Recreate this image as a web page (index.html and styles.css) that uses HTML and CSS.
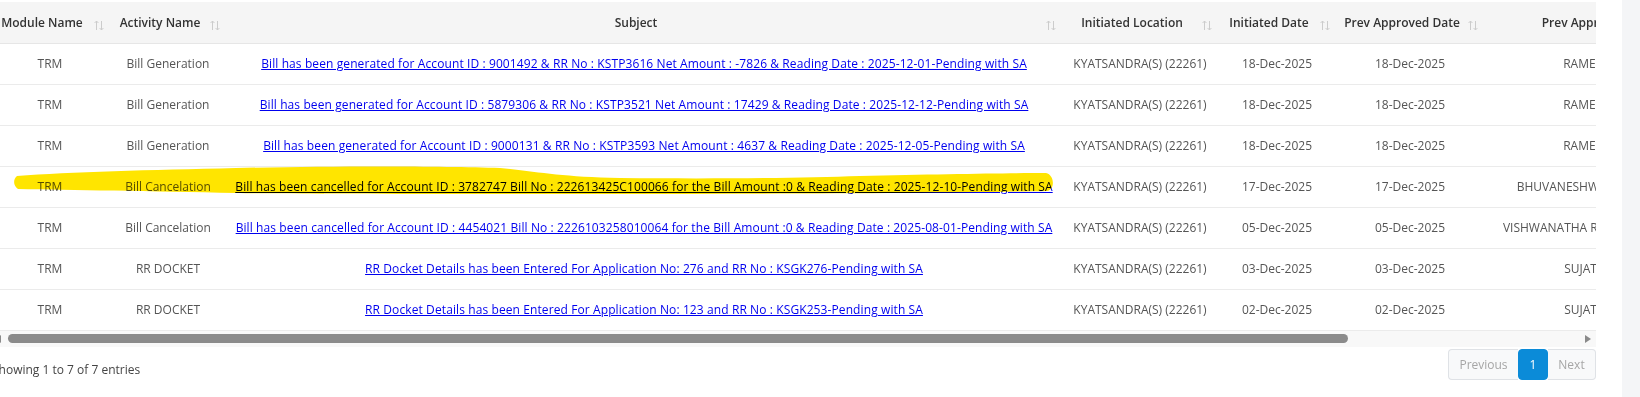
FILE: index.html
```html
<!DOCTYPE html>
<html lang="en">
<head>
<meta charset="utf-8">
<title>Pending Approvals</title>
<link rel="stylesheet" href="styles.css">
</head>
<body>
<div class="page">
  <div class="main">
    <div class="table-wrap">
      <table class="grid">
        <colgroup>
          <col class="c-module"><col class="c-activity"><col class="c-subject"><col class="c-location"><col class="c-date"><col class="c-prevdate"><col class="c-prevby">
        </colgroup>
        <thead>
          <tr>
            <th><div class="th-in"><span class="lbl">Module Name</span><span class="sort"><svg width="10" height="11" viewBox="0 0 10 11"><path d="M2.5 10V1M0.6 3L2.5 1L4.4 3M7.5 1V10M5.6 8L7.5 10L9.4 8" fill="none" stroke="#cccccc" stroke-width="1"/></svg></span></div></th>
            <th><div class="th-in"><span class="lbl">Activity Name</span><span class="sort"><svg width="10" height="11" viewBox="0 0 10 11"><path d="M2.5 10V1M0.6 3L2.5 1L4.4 3M7.5 1V10M5.6 8L7.5 10L9.4 8" fill="none" stroke="#cccccc" stroke-width="1"/></svg></span></div></th>
            <th><div class="th-in"><span class="lbl">Subject</span><span class="sort"><svg width="10" height="11" viewBox="0 0 10 11"><path d="M2.5 10V1M0.6 3L2.5 1L4.4 3M7.5 1V10M5.6 8L7.5 10L9.4 8" fill="none" stroke="#cccccc" stroke-width="1"/></svg></span></div></th>
            <th><div class="th-in"><span class="lbl">Initiated Location</span><span class="sort"><svg width="10" height="11" viewBox="0 0 10 11"><path d="M2.5 10V1M0.6 3L2.5 1L4.4 3M7.5 1V10M5.6 8L7.5 10L9.4 8" fill="none" stroke="#cccccc" stroke-width="1"/></svg></span></div></th>
            <th><div class="th-in"><span class="lbl">Initiated Date</span><span class="sort"><svg width="10" height="11" viewBox="0 0 10 11"><path d="M2.5 10V1M0.6 3L2.5 1L4.4 3M7.5 1V10M5.6 8L7.5 10L9.4 8" fill="none" stroke="#cccccc" stroke-width="1"/></svg></span></div></th>
            <th><div class="th-in"><span class="lbl">Prev Approved Date</span><span class="sort"><svg width="10" height="11" viewBox="0 0 10 11"><path d="M2.5 10V1M0.6 3L2.5 1L4.4 3M7.5 1V10M5.6 8L7.5 10L9.4 8" fill="none" stroke="#cccccc" stroke-width="1"/></svg></span></div></th>
            <th><div class="th-in"><span class="lbl">Prev Approved By</span><span class="sort"><svg width="10" height="11" viewBox="0 0 10 11"><path d="M2.5 10V1M0.6 3L2.5 1L4.4 3M7.5 1V10M5.6 8L7.5 10L9.4 8" fill="none" stroke="#cccccc" stroke-width="1"/></svg></span></div></th>
          </tr>
        </thead>
        <tbody>
          <tr>
            <td>TRM</td><td>Bill Generation</td>
            <td><a href="#">Bill has been generated for Account ID : 9001492 &amp; RR No : KSTP3616 Net Amount : -7826 &amp; Reading Date : 2025-12-01-Pending with SA</a></td>
            <td>KYATSANDRA(S) (22261)</td><td>18-Dec-2025</td><td>18-Dec-2025</td><td>RAMESHA K S</td>
          </tr>
          <tr>
            <td>TRM</td><td>Bill Generation</td>
            <td><a href="#">Bill has been generated for Account ID : 5879306 &amp; RR No : KSTP3521 Net Amount : 17429 &amp; Reading Date : 2025-12-12-Pending with SA</a></td>
            <td>KYATSANDRA(S) (22261)</td><td>18-Dec-2025</td><td>18-Dec-2025</td><td>RAMESHA K S</td>
          </tr>
          <tr>
            <td>TRM</td><td>Bill Generation</td>
            <td><a href="#">Bill has been generated for Account ID : 9000131 &amp; RR No : KSTP3593 Net Amount : 4637 &amp; Reading Date : 2025-12-05-Pending with SA</a></td>
            <td>KYATSANDRA(S) (22261)</td><td>18-Dec-2025</td><td>18-Dec-2025</td><td>RAMESHA K S</td>
          </tr>
          <tr>
            <td>TRM</td><td>Bill Cancelation</td>
            <td><a href="#">Bill has been cancelled for Account ID : 3782747 Bill No : 222613425C100066 for the Bill Amount :0 &amp; Reading Date : 2025-12-10-Pending with SA</a></td>
            <td>KYATSANDRA(S) (22261)</td><td>17-Dec-2025</td><td>17-Dec-2025</td><td>BHUVANESHWARI B G SHETTY</td>
          </tr>
          <tr>
            <td>TRM</td><td>Bill Cancelation</td>
            <td><a href="#">Bill has been cancelled for Account ID : 4454021 Bill No : 2226103258010064 for the Bill Amount :0 &amp; Reading Date : 2025-08-01-Pending with SA</a></td>
            <td>KYATSANDRA(S) (22261)</td><td>05-Dec-2025</td><td>05-Dec-2025</td><td>VISHWANATHA R (ASST. ENGINEER)</td>
          </tr>
          <tr>
            <td>TRM</td><td>RR DOCKET</td>
            <td><a href="#">RR Docket Details has been Entered For Application No: 276 and RR No : KSGK276-Pending with SA</a></td>
            <td>KYATSANDRA(S) (22261)</td><td>03-Dec-2025</td><td>03-Dec-2025</td><td>SUJATHA M R</td>
          </tr>
          <tr>
            <td>TRM</td><td>RR DOCKET</td>
            <td><a href="#">RR Docket Details has been Entered For Application No: 123 and RR No : KSGK253-Pending with SA</a></td>
            <td>KYATSANDRA(S) (22261)</td><td>02-Dec-2025</td><td>02-Dec-2025</td><td>SUJATHA M R</td>
          </tr>
        </tbody>
      </table>
    </div>
    <div class="hscroll">
      <span class="sb-btn sb-left"><span class="tri-left"></span></span>
      <div class="sb-track"><div class="sb-thumb"></div></div>
      <span class="sb-btn sb-right"><span class="tri-right"></span></span>
    </div>
    <div class="footer">
      <div class="info">Showing 1 to 7 of 7 entries</div>
      <div class="paginate">
        <span class="pg pg-prev">Previous</span>
        <span class="pg pg-cur">1</span>
        <span class="pg pg-next">Next</span>
      </div>
    </div>
  </div>
  <aside class="side"></aside>
  <svg class="marker" width="1100" height="210" viewBox="0 0 1100 210">
    <path d="M17 176 C70 172 150 170 236 168 C330 166 440 166 500 168 C540 172 560 177 620 178 C720 179 800 178 860 176 C940 174 1010 173 1046 173 C1055 175 1055 190 1047 191 C960 193 800 194 620 194 C480 194 300 194 236 193 C150 191 70 190 18 189 C13 186 13 179 17 176 Z" fill="#ffe500"/>
  </svg>
</div>
</body>
</html>
```
FILE: styles.css
```css
* { box-sizing: border-box; }
html, body { margin: 0; padding: 0; background: #ffffff; }
body {
  font-family: "Open Sans", "Noto Sans", "Liberation Sans", sans-serif;
  font-size: 12px;
  color: #555555;
  width: 1640px;
  height: 397px;
  overflow: hidden;
}
.page {
  position: relative;
  display: flex;
  height: 397px;
}
.main {
  width: 1606px;
  margin-left: -10px;
  padding-top: 2px;
  flex: none;
}
.side {
  margin-left: 26px;
  width: 18px;
  background: #f4f5f7;
  flex: none;
}
.table-wrap {
  width: 1606px;
  overflow: hidden;
}
.grid {
  border-collapse: collapse;
  table-layout: fixed;
  width: 1728px;
}
.c-module { width: 120px; }
.c-activity { width: 116px; }
.c-subject { width: 836px; }
.c-location { width: 156px; }
.c-date { width: 118px; }
.c-prevdate { width: 148px; }
.c-prevby { width: 234px; }

.grid th {
  height: 41px;
  background: #f5f5f5;
  border-bottom: 1px solid #e6e6e6;
  padding: 0 6px 0 8px;
  font-weight: 600;
  color: #333333;
  white-space: nowrap;
  overflow: hidden;
}
.th-in {
  display: flex;
  align-items: center;
}
.lbl {
  flex: 1;
  text-align: center;
  white-space: nowrap;
}
.sort {
  width: 18px;
  display: flex;
  justify-content: flex-end;
  padding-top: 7px;
}
.sort svg { display: block; }
.grid td {
  height: 41px;
  border-bottom: 1px solid #ebebeb;
  padding: 0 8px;
  text-align: center;
  white-space: nowrap;
  overflow: hidden;
}
.grid td a {
  color: #0000ee;
  text-decoration: underline;
  letter-spacing: 0.1px;
}

.hscroll {
  display: flex;
  align-items: center;
  height: 16px;
  background: #f8f8f8;
}
.sb-btn {
  width: 15px;
  height: 16px;
  display: flex;
  align-items: center;
  justify-content: center;
  flex: none;
}
.sb-right { width: 16px; justify-content: flex-start; padding-left: 5px; }
.tri-left {
  width: 0; height: 0;
  border-top: 4px solid transparent;
  border-bottom: 4px solid transparent;
  border-right: 6px solid #8a8a8a;
}
.tri-right {
  width: 0; height: 0;
  border-top: 4px solid transparent;
  border-bottom: 4px solid transparent;
  border-left: 6px solid #8a8a8a;
}
.sb-track {
  flex: 1;
  height: 16px;
  display: flex;
  align-items: center;
}
.sb-thumb {
  margin-left: 3px;
  width: 1340px;
  height: 9px;
  border-radius: 5px;
  background: #8b8b8b;
}

.footer {
  display: flex;
  justify-content: space-between;
  align-items: flex-start;
  margin-top: 2px;
}
.info {
  padding-left: 2px;
  padding-top: 12px;
  font-size: 12px;
  color: #444444;
}
.paginate {
  display: flex;
  height: 31px;
}
.pg {
  display: flex;
  align-items: center;
  justify-content: center;
  height: 31px;
  border: 1px solid #dfe2e6;
  background: #f8f9fa;
  color: #a6a6a6;
  font-size: 12px;
}
.pg-prev { width: 70px; border-radius: 4px 0 0 4px; border-right: none; }
.pg-cur {
  width: 30px;
  background: #0b8bd8;
  border-color: #0b8bd8;
  color: #ffffff;
  border-radius: 4px;
}
.pg-next { width: 48px; border-radius: 0 4px 4px 0; border-left: none; }

.marker {
  position: absolute;
  left: 0;
  top: 0;
  mix-blend-mode: multiply;
  pointer-events: none;
}
```
